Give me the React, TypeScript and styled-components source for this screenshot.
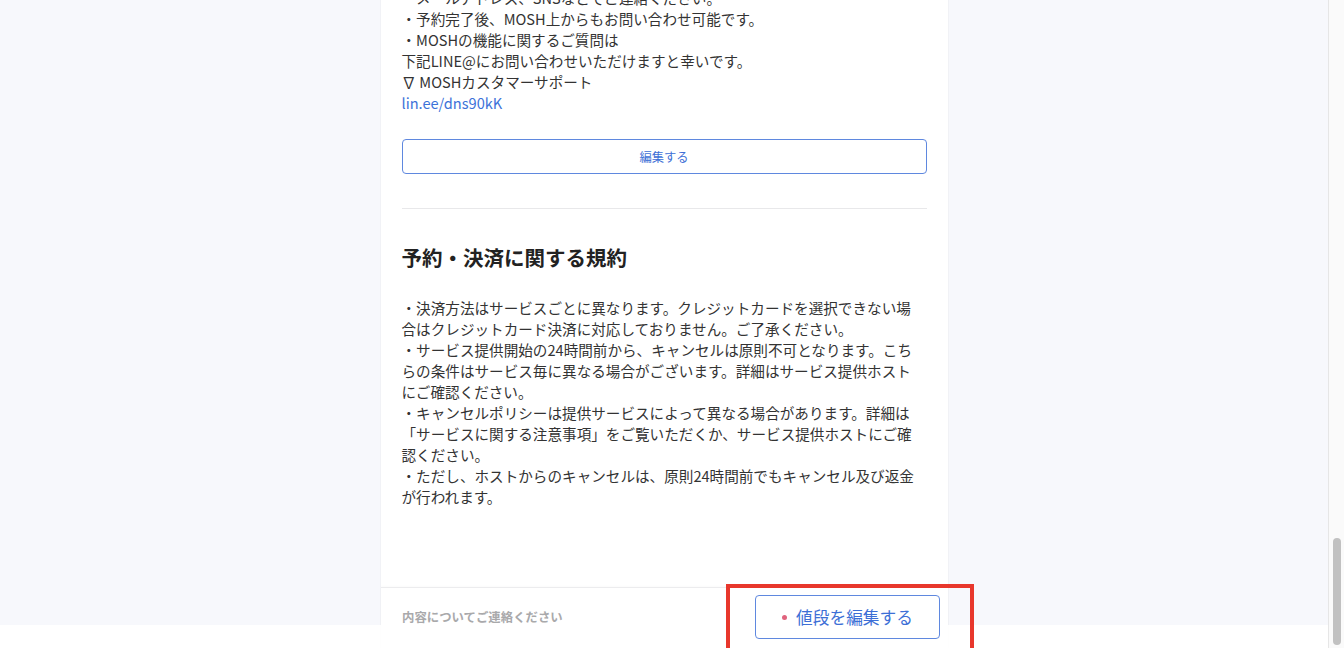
import React from "react";
import styled, { createGlobalStyle } from "styled-components";

const GlobalStyle = createGlobalStyle`
  html, body {
    margin: 0;
    padding: 0;
    overflow: hidden;
  }
  body {
    font-family: "Noto Sans CJK JP", "Noto Sans", sans-serif;
    color: #333;
  }
`;

const Screen = styled.div`
  position: relative;
  width: 1344px;
  height: 648px;
  display: flex;
  overflow: hidden;
  background: #fff;
`;

const Main = styled.div`
  flex: 1;
  display: flex;
  flex-direction: column;
`;

const Viewport = styled.div`
  height: 625px;
  background: #f7f8fc;
  overflow: hidden;
  display: flex;
  justify-content: center;
`;

const BottomStrip = styled.div`
  flex: 1;
  background: #fff;
`;

const Card = styled.div`
  width: 567px;
  margin-top: -13px;
  padding: 0 21px 140px;
  box-sizing: border-box;
  background: #fff;
  box-shadow: 0 0 0 1px #f1f2f6;
  align-self: flex-start;
`;

const Body = styled.p`
  margin: 0;
  font-size: 14.6px;
  line-height: 21px;
  color: #333;
  white-space: pre-line;
`;

const Link = styled.a`
  color: #3d72d9;
  text-decoration: none;
`;

const OutlineButton = styled.button<{ $size?: "small" | "large" }>`
  display: flex;
  align-items: center;
  justify-content: center;
  gap: 9px;
  box-sizing: border-box;
  background: #fff;
  border: 1px solid #5f88df;
  border-radius: 4px;
  color: #3d6fd6;
  font-family: inherit;
  cursor: pointer;
  font-size: ${(p) => (p.$size === "large" ? "16.7px" : "12.3px")};
  height: ${(p) => (p.$size === "large" ? "44px" : "35px")};
  width: ${(p) => (p.$size === "large" ? "185px" : "100%")};
  padding: 0;
`;

const EditButton = styled(OutlineButton)`
  margin-top: 26px;
`;

const Divider = styled.hr`
  border: none;
  border-top: 1px solid #e8e8ea;
  margin: 34px 0 0;
`;

const Heading = styled.h2`
  margin: 33px 0 25px;
  font-size: 20.5px;
  line-height: 30px;
  font-weight: 700;
  color: #222;
`;

const Scrollbar = styled.div`
  width: 16px;
  box-sizing: border-box;
  border-left: 1px solid #e6e6e6;
  background: #fafafa;
  display: flex;
  flex-direction: column;
  align-items: center;
  padding-top: 538px;
`;

const Thumb = styled.div`
  width: 8px;
  height: 107px;
  border-radius: 4px;
  background: #c1c1c1;
`;

const Footer = styled.div`
  position: absolute;
  left: 381px;
  top: 587px;
  width: 567px;
  height: 70px;
  box-sizing: border-box;
  background: #fff;
  border-top: 1px solid #ececee;
  box-shadow: 0 -1px 2px rgba(0, 0, 0, 0.02);
  padding: 7px 8px 0 21px;
  display: flex;
  justify-content: space-between;
  align-items: flex-start;
`;

const FooterNote = styled.span`
  margin-top: 13px;
  font-size: 12.4px;
  line-height: 18px;
  font-weight: 700;
  color: #a9a9ab;
`;

const Dot = styled.span`
  width: 5px;
  height: 5px;
  border-radius: 50%;
  background: #e0637d;
`;

const Highlight = styled.div`
  position: absolute;
  left: 726px;
  top: 584px;
  width: 248px;
  height: 80px;
  box-sizing: border-box;
  border: 4px solid #e8372c;
  pointer-events: none;
`;

const contactText = `・メールアドレス、SNSなどでご連絡ください。
・予約完了後、MOSH上からもお問い合わせ可能です。
・MOSHの機能に関するご質問は
下記LINE@にお問い合わせいただけますと幸いです。
∇ MOSHカスタマーサポート
`;

const termsText = `・決済方法はサービスごとに異なります。クレジットカードを選択できない場
合はクレジットカード決済に対応しておりません。ご了承ください。
・サービス提供開始の24時間前から、キャンセルは原則不可となります。こち
らの条件はサービス毎に異なる場合がございます。詳細はサービス提供ホスト
にご確認ください。
・キャンセルポリシーは提供サービスによって異なる場合があります。詳細は
「サービスに関する注意事項」をご覧いただくか、サービス提供ホストにご確
認ください。
・ただし、ホストからのキャンセルは、原則24時間前でもキャンセル及び返金
が行われます。`;

export default function App() {
  return (
    <>
      <GlobalStyle />
      <Screen>
        <Main>
          <Viewport>
            <Card>
              <Body>
                {contactText}
                <Link href="#">lin.ee/dns90kK</Link>
              </Body>
              <EditButton>編集する</EditButton>
              <Divider />
              <Heading>予約・決済に関する規約</Heading>
              <Body>{termsText}</Body>
            </Card>
          </Viewport>
          <BottomStrip />
        </Main>
        <Scrollbar>
          <Thumb />
        </Scrollbar>
        <Footer>
          <FooterNote>内容についてご連絡ください</FooterNote>
          <OutlineButton $size="large">
            <Dot />
            値段を編集する
          </OutlineButton>
        </Footer>
        <Highlight />
      </Screen>
    </>
  );
}
